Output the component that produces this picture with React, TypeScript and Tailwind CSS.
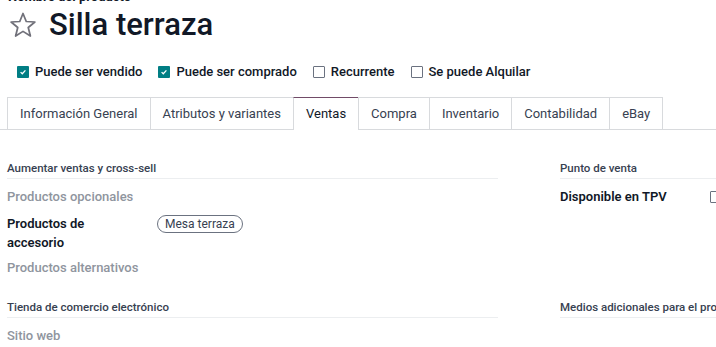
import React from "react";

const tabs = [
  "Información General",
  "Atributos y variantes",
  "Ventas",
  "Compra",
  "Inventario",
  "Contabilidad",
  "eBay",
];

const flags = [
  { label: "Puede ser vendido", on: true },
  { label: "Puede ser comprado", on: true },
  { label: "Recurrente", on: false },
  { label: "Se puede Alquilar", on: false },
];

function Box({ on }: { on: boolean }) {
  if (on) {
    return (
      <span className="flex h-[12px] w-[12px] items-center justify-center rounded-[1px] bg-[#017e84]">
        <svg viewBox="0 0 10 10" className="h-[8px] w-[8px]">
          <path d="M2 5.2 L4.1 7.2 L8 3" fill="none" stroke="white" strokeWidth="1.6" />
        </svg>
      </span>
    );
  }
  return <span className="block h-[12px] w-[12px] rounded-[1px] border border-[#6b7280] bg-white" />;
}

function Star() {
  return (
    <svg viewBox="0 0 24 24" className="h-[30px] w-[30px]">
      <path
        d="M12 2.8 L14.6 9.2 L21.5 9.6 L16.2 14 L17.9 20.8 L12 17.1 L6.1 20.8 L7.8 14 L2.5 9.6 L9.4 9.2 Z"
        fill="none"
        stroke="#71717a"
        strokeWidth="1.4"
        strokeLinejoin="round"
      />
    </svg>
  );
}

function SectionTitle({ children }: { children: React.ReactNode }) {
  return (
    <div className="whitespace-nowrap border-b border-[#eceef0] pb-px text-[11.5px] font-medium leading-[17px] text-[#374151]">
      {children}
    </div>
  );
}

function Muted({ children }: { children: React.ReactNode }) {
  return <div className="text-[13px] font-medium leading-[19px] text-[#8f959e]">{children}</div>;
}

export default function App() {
  return (
    <div
      className="h-[347px] w-[716px] overflow-hidden bg-white text-[#111827]"
      style={{ fontFamily: "Roboto, 'Noto Sans', sans-serif" }}
    >
      {/* header */}
      <div className="px-[8px]">
        <div className="-mt-[11px] text-[13px] font-bold leading-[16px] text-[#111827]">Nombre del producto</div>
        <div className="mt-[-2px] flex items-center gap-[11px]">
          <Star />
          <h1 className="text-[31px] font-medium leading-[44px] text-[#111827]">Silla terraza</h1>
        </div>
        <div className="mt-[17px] flex items-center gap-[16px] pl-[9px]">
          {flags.map((f) => (
            <label key={f.label} className="flex items-center gap-[6px] text-[13px] font-medium leading-[16px] text-[#111827]">
              <Box on={f.on} />
              {f.label}
            </label>
          ))}
        </div>
      </div>

      {/* tabs */}
      <div className="mt-[17px] flex border-b border-[#d8dadd] pl-[7px]">
        {tabs.map((t) => {
          const active = t === "Ventas";
          return (
            <div
              key={t}
              className={
                active
                  ? "-mb-px -ml-px border-x border-t border-x-[#d8dadd] border-t-[#714b67] bg-white px-[12px] text-[13px] leading-[31px] text-[#111827]"
                  : "-ml-px border border-b-0 border-[#d8dadd] px-[12px] text-[13px] leading-[31px] text-[#374151] first:ml-0"
              }
            >
              {t}
            </div>
          );
        })}
      </div>

      {/* content */}
      <div className="mt-[30px] grid grid-cols-[491px_491px] gap-x-[62px] pl-[7px]">
        <div>
          <SectionTitle>Aumentar ventas y cross-sell</SectionTitle>
          <div className="mt-[8px]">
            <Muted>Productos opcionales</Muted>
          </div>
          <div className="mt-[8px] flex">
            <div className="w-[150px] text-[13px] font-semibold leading-[19px] text-[#111827]">
              Productos de
              <br />
              accesorio
            </div>
            <div className="flex items-start pt-px">
              <span className="rounded-full border border-[#6b7280] px-[7px] text-[12px] leading-[16px] text-[#374151]">
                Mesa terraza
              </span>
            </div>
          </div>
          <div className="mt-[6px]">
            <Muted>Productos alternativos</Muted>
          </div>
        </div>

        <div>
          <SectionTitle>Punto de venta</SectionTitle>
          <div className="mt-[8px] flex items-center">
            <div className="w-[150px] text-[13px] font-semibold leading-[19px] text-[#111827]">Disponible en TPV</div>
            <Box on={false} />
          </div>
        </div>

        <div className="mt-[22px]">
          <SectionTitle>Tienda de comercio electrónico</SectionTitle>
          <div className="mt-[8px]">
            <Muted>Sitio web</Muted>
          </div>
        </div>

        <div className="mt-[22px]">
          <SectionTitle>Medios adicionales para el producto</SectionTitle>
        </div>
      </div>
    </div>
  );
}
